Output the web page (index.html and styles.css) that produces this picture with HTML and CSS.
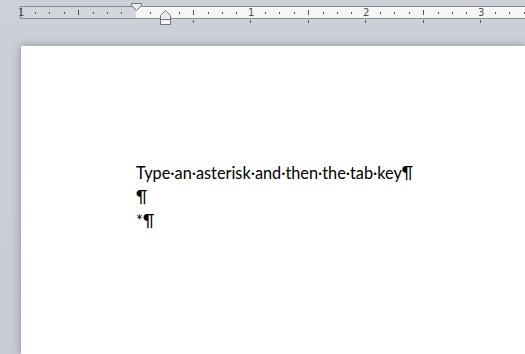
FILE: index.html
```html
<!DOCTYPE html>
<html lang="en">
<head>
    <meta charset="UTF-8">
    <meta name="viewport" content="width=device-width, initial-scale=1.0">
    <title>Document</title>
    <link rel="stylesheet" href="styles.css">
</head>
<body>
    <div class="ruler-area">
        <div class="ruler">
            <div class="ticks">
                <span class="num">1</span><span class="dot"></span><span class="dot"></span><span class="dot"></span><span class="half"></span><span class="dot"></span><span class="dot"></span><span class="dot"></span>
                <span class="blank"></span><span class="dot"></span><span class="dot"></span><span class="dot"></span><span class="half"></span><span class="dot"></span><span class="dot"></span><span class="dot"></span>
                <span class="num">1</span><span class="dot"></span><span class="dot"></span><span class="dot"></span><span class="half"></span><span class="dot"></span><span class="dot"></span><span class="dot"></span>
                <span class="num">2</span><span class="dot"></span><span class="dot"></span><span class="dot"></span><span class="half"></span><span class="dot"></span><span class="dot"></span><span class="dot"></span>
                <span class="num">3</span><span class="dot"></span><span class="dot"></span><span class="dot"></span><span class="half"></span>
            </div>
            <svg class="marker first-line" width="11" height="8" viewBox="0 0 11 8">
                <path d="M0.5 0.5 H10.5 V2.5 L5.5 7.5 L0.5 2.5 Z" fill="#ececec" stroke="#6f747b"/>
            </svg>
            <svg class="marker hanging" width="11" height="16" viewBox="0 0 11 16">
                <path d="M5.5 0.5 L10.5 5.5 V9.5 H0.5 V5.5 Z" fill="#ececec" stroke="#6f747b"/>
                <rect x="0.5" y="9.5" width="10" height="5" fill="#f4f4f4" stroke="#6f747b"/>
            </svg>
        </div>
        <div class="tabstops">
            <span></span><span></span><span></span><span></span><span></span><span></span>
        </div>
    </div>
    <div class="page">
        <p>Type·an·asterisk·and·then·the·tab·key¶</p>
        <p>¶</p>
        <p>*¶</p>
    </div>
</body>
</html>
```

FILE: styles.css
```css
html, body {
    height: 100%;
}

body {
    margin: 0;
    overflow: hidden;
    background: linear-gradient(#cdd1d7, #c9cdd3);
    font-family: Lato, "Liberation Sans", sans-serif;
}

.ruler-area {
    padding: 6px 0 0 20px;
}

.ruler {
    position: relative;
    height: 11px;
    border: 1px solid #878c93;
    border-right: none;
    background: linear-gradient(to right, #d3d7dc 0, #d3d7dc 115px, #f6f6f6 115px);
}

.ticks {
    display: flex;
    margin-left: -7px;
    height: 100%;
}

.ticks span {
    flex: 0 0 14.375px;
    display: flex;
    justify-content: center;
    align-items: center;
}

.dot::before {
    content: "";
    width: 1px;
    height: 2px;
    background: #4d5157;
}

.half::before {
    content: "";
    width: 1px;
    height: 5px;
    background: #4d5157;
}

.num {
    font-family: "DejaVu Sans", sans-serif;
    font-size: 10px;
    color: #4a4e55;
}

.marker {
    position: absolute;
    display: block;
}

.first-line {
    left: 110px;
    top: -4px;
}

.hanging {
    left: 139px;
    top: 3px;
}

.tabstops {
    display: flex;
    padding-left: 172.5px;
    height: 5px;
}

.tabstops span {
    flex: 0 0 57.5px;
    height: 4px;
    display: flex;
    align-items: flex-end;
}

.tabstops span::before {
    content: "";
    width: 1px;
    height: 3px;
    background: #55595f;
}

.page {
    box-sizing: border-box;
    height: 308px;
    margin: 22px 0 0 21px;
    background: #ffffff;
    box-shadow: 0 0 9px rgba(60, 66, 76, 0.45);
    padding: 115px 0 0 115px;
}

.page p {
    margin: 0;
    font-size: 16.3px;
    line-height: 24px;
    color: #000000;
}
```
